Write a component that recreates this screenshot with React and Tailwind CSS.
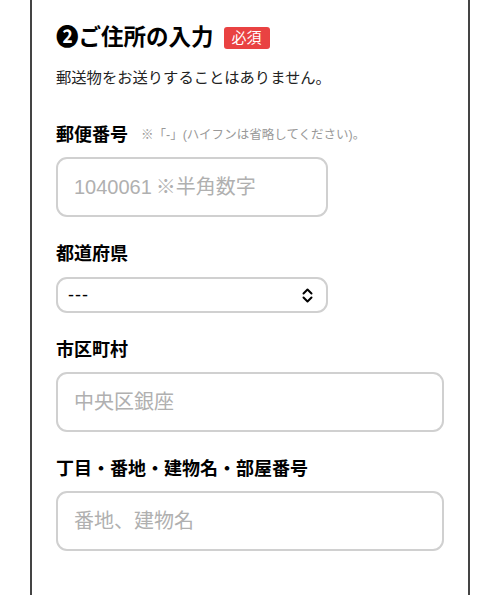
export default function App() {
  const font = { fontFamily: '"Liberation Sans", "Noto Sans CJK JP", sans-serif' };

  return (
    <div className="w-[500px] h-[595px] bg-white overflow-hidden" style={font}>
      <div className="mx-[30px] h-full border-x-2 border-[#444] px-6 pt-[26px]">
        {/* Heading */}
        <div className="flex items-center h-[24px]">
          <h2 className="text-[22.5px] font-bold text-black leading-none">❷ご住所の入力</h2>
          <span className="ml-[10px] h-[22px] px-[8px] rounded-[3px] bg-[#e94242] text-white text-[15px] leading-[22px]">
            必須
          </span>
        </div>
        <p className="mt-[17px] text-[15.3px] leading-[22px] text-[#222]">
          郵送物をお送りすることはありません。
        </p>

        {/* Postal code */}
        <div className="mt-[33px] flex items-center h-[26px]">
          <span className="text-[18px] font-bold text-black">郵便番号</span>
          <span className="ml-[13px] text-[12.5px] text-[#999]">※「-」(ハイフンは省略してください)。</span>
        </div>
        <input
          className="mt-[9px] block w-[272px] h-[60px] rounded-[11px] border-2 border-[#d0d0d0] px-4 text-[20px] text-black placeholder:text-[#b0b0b0] outline-none"
          placeholder={"1040061\u2009※半角数字"}
        />

        {/* Prefecture */}
        <div className="mt-[24px] h-[26px] leading-[26px] text-[18px] font-bold text-black">都道府県</div>
        <div className="relative mt-[10px] w-[272px]">
          <select className="block w-full h-[36px] appearance-none rounded-[11px] border-2 border-[#d0d0d0] bg-white pl-[10px] text-[18px] tracking-[1px] font-medium text-black outline-none">
            <option>---</option>
          </select>
          <svg
            className="absolute right-[15px] top-[11px] pointer-events-none"
            width="11"
            height="15"
            viewBox="0 0 11 15"
            fill="none"
            stroke="black"
            strokeWidth="2"
            strokeLinecap="round"
            strokeLinejoin="round"
          >
            <path d="M1.5 5.5 L5.5 1.5 L9.5 5.5" />
            <path d="M1.5 9.5 L5.5 13.5 L9.5 9.5" />
          </svg>
        </div>

        {/* City */}
        <div className="mt-[24px] h-[26px] leading-[26px] text-[18px] font-bold text-black">市区町村</div>
        <input
          className="mt-[9px] block w-full h-[60px] rounded-[11px] border-2 border-[#d0d0d0] px-4 text-[20px] text-black placeholder:text-[#b0b0b0] outline-none"
          placeholder="中央区銀座"
        />

        {/* Address */}
        <div className="mt-[24px] h-[26px] leading-[26px] text-[18px] font-bold text-black">
          丁目・番地・建物名・部屋番号
        </div>
        <input
          className="mt-[9px] block w-full h-[60px] rounded-[11px] border-2 border-[#d0d0d0] px-4 text-[20px] text-black placeholder:text-[#b0b0b0] outline-none"
          placeholder="番地、建物名"
        />
      </div>
    </div>
  );
}
